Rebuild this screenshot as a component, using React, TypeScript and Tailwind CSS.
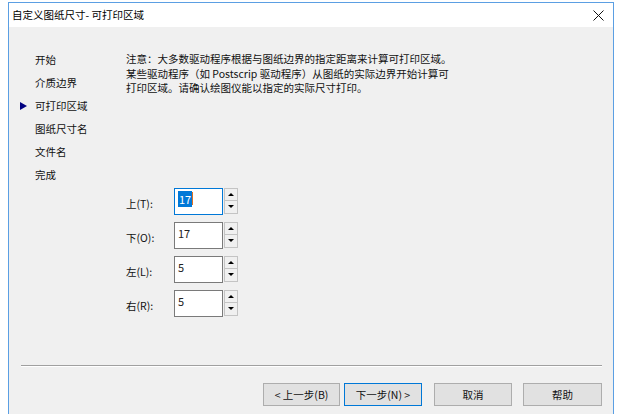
import React from 'react';

const font = { fontFamily: '"Noto Sans CJK SC", "Noto Sans", sans-serif' };

const steps = ['开始', '介质边界', '可打印区域', '图纸尺寸名', '文件名', '完成'];

const fields = [
  { label: '上(T):', value: '17', focused: true },
  { label: '下(O):', value: '17' },
  { label: '左(L):', value: '5' },
  { label: '右(R):', value: '5' },
];

const Spinner = ({ value, focused }: { value: string; focused?: boolean }) => (
  <div className="flex items-start">
    <div
      className={`w-[49px] h-[27px] bg-white border px-[3px] pt-[2px] leading-[16px] text-[11px] text-[#222] ${
        focused ? 'border-[#0078d7]' : 'border-[#7a7a7a]'
      }`}
    >
      {focused ? (
        <span className="inline-flex items-center">
          <span className="bg-[#0078d7] text-white px-[1px]">{value}</span>
          <span className="w-[1px] h-[13px] bg-[#e07020]" />
        </span>
      ) : (
        value
      )}
    </div>
    <div className="ml-[1px] flex flex-col">
      <div className="w-[14px] h-[13px] bg-[#f0f0f0] border border-[#c4c4c4] flex items-center justify-center">
        <div className="w-0 h-0 border-x-[3px] border-x-transparent border-b-[3px] border-b-black" />
      </div>
      <div className="w-[14px] h-[13px] bg-[#f0f0f0] border border-[#c4c4c4] border-t-0 flex items-center justify-center">
        <div className="w-0 h-0 border-x-[3px] border-x-transparent border-t-[3px] border-t-black" />
      </div>
    </div>
  </div>
);

const Btn = ({ children, primary, w }: { children: React.ReactNode; primary?: boolean; w: string }) => (
  <div
    className={`${w} h-[23px] bg-[#e1e1e1] border flex items-center justify-center text-[10.5px] text-[#111] ${
      primary ? 'border-[#0078d7]' : 'border-[#adadad]'
    }`}
  >
    {children}
  </div>
);

export default function App() {
  return (
    <div className="w-[620px] h-[414px] bg-white pt-[2px] pl-[8px] pr-[6px] overflow-hidden" style={font}>
      <div className="h-[420px] border-x border-t border-[#5b9fe3] flex flex-col">
        <div className="h-[24px] bg-white flex items-center justify-between pl-[3px] pr-[9px]">
          <span className="text-[10.5px] text-black">自定义图纸尺寸- 可打印区域</span>
          <svg width="11" height="11" viewBox="0 0 11 11">
            <path d="M0.5 0.5L10.5 10.5M10.5 0.5L0.5 10.5" stroke="#111" strokeWidth="1" />
          </svg>
        </div>
        <div className="flex-1 bg-[#f0f0f0] flex flex-col">
          <div className="h-[338px] flex">
            <div className="w-[117px] pl-[11px] pt-[21px] text-[10.5px] text-[#111]">
              {steps.map((s, i) => (
                <div key={s} className="h-[23px] flex items-center">
                  <span className="w-[15px] flex items-center">
                    {i === 2 && (
                      <span className="w-0 h-0 border-y-[4.5px] border-y-transparent border-l-[7px] border-l-[#000080]" />
                    )}
                  </span>
                  {s}
                </div>
              ))}
            </div>
            <div className="flex-1 pt-[25px]">
              <p className="text-[10.5px] leading-[14.5px] text-[#111]">
                注意：大多数驱动程序根据与图纸边界的指定距离来计算可打印区域。
                <br />
                某些驱动程序（如 Postscrip 驱动程序）从图纸的实际边界开始计算可
                <br />
                打印区域。请确认绘图仪能以指定的实际尺寸打印。
              </p>
              <div className="mt-[92px] flex flex-col gap-[7px]">
                {fields.map((f) => (
                  <div key={f.label} className="flex items-start">
                    <span className="w-[48px] pt-[8px] text-[10.5px] text-[#111]">{f.label}</span>
                    <Spinner value={f.value} focused={f.focused} />
                  </div>
                ))}
              </div>
            </div>
          </div>
          <div className="ml-[12px] mr-[11px] h-[2px] border-t border-[#a0a0a0] border-b border-b-white" />
          <div className="mt-[16px] flex justify-end pr-[11px]">
            <Btn w="w-[77px]">&lt; 上一步(B)</Btn>
            <div className="w-[4px]" />
            <Btn w="w-[78px]" primary>
              下一步(N) &gt;
            </Btn>
            <div className="w-[12px]" />
            <Btn w="w-[78px]">取消</Btn>
            <div className="w-[11px]" />
            <Btn w="w-[79px]">帮助</Btn>
          </div>
        </div>
      </div>
    </div>
  );
}
